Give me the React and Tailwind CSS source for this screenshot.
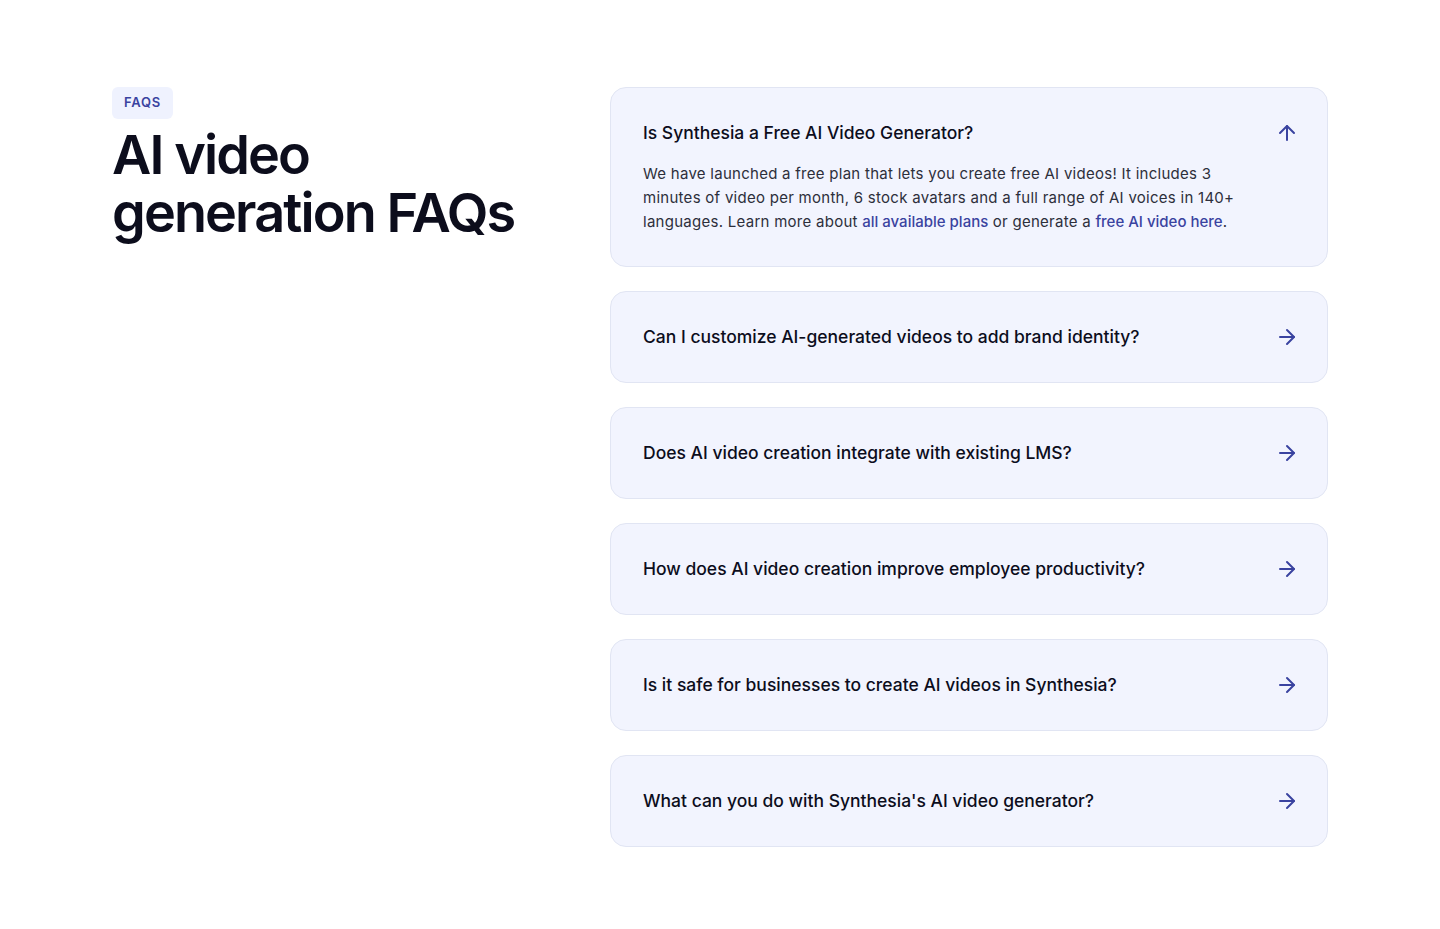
import { ArrowRight, ArrowUp } from "lucide-react";

const faqs = [
  "Can I customize AI-generated videos to add brand identity?",
  "Does AI video creation integrate with existing LMS?",
  "How does AI video creation improve employee productivity?",
  "Is it safe for businesses to create AI videos in Synthesia?",
  "What can you do with Synthesia's AI video generator?",
];

export default function App() {
  return (
    <div className="min-h-screen bg-white font-['Inter',sans-serif] text-[#0c0d1c]">
      <section className="mx-auto flex w-[1216px] gap-6 pt-[87px] pb-20">
        {/* Left heading */}
        <div className="flex-1">
          <span className="inline-flex h-8 items-center rounded-md bg-[#eff2fe] px-3 text-[13px] font-semibold tracking-[0.06em] text-[#3a43a0]">
            FAQS
          </span>
          <h2 className="mt-[7px] text-[54px] font-semibold leading-[58px] tracking-[-0.035em] text-[#0c0d1c]">
            AI video
            <br />
            generation FAQs
          </h2>
        </div>

        {/* Right accordion */}
        <div className="flex w-[718px] flex-col gap-6">
          <div className="rounded-2xl border border-[#e1e5f3] bg-[#f2f4fe] px-8 pt-8 pb-8">
            <div className="flex h-[26px] items-center justify-between">
              <h3 className="text-[17.5px] font-medium leading-[26px] text-[#0c0d1c]">
                Is Synthesia a Free AI Video Generator?
              </h3>
              <ArrowUp className="-mr-1 h-6 w-6 text-[#3a43a0]" strokeWidth={2} />
            </div>
            <p className="mt-4 pr-12 text-[15px] leading-6 tracking-[0.018em] text-[#2d2f3b]">
              We have launched a free plan that lets you create free AI videos! It includes 3 minutes of video per month, 6 stock avatars and a full range of AI voices in 140+ languages. Learn more about{" "}
              <a className="font-medium tracking-normal text-[#3a43a0]">all available plans</a> or generate a{" "}
              <a className="font-medium tracking-normal text-[#3a43a0]">free AI video here</a>.
            </p>
          </div>

          {faqs.map((q) => (
            <div
              key={q}
              className="flex h-[92px] items-center justify-between rounded-2xl border border-[#e1e5f3] bg-[#f2f4fe] px-8"
            >
              <h3 className="text-[17.5px] font-medium leading-[26px] text-[#0c0d1c]">{q}</h3>
              <ArrowRight className="-mr-1 h-6 w-6 text-[#3a43a0]" strokeWidth={2} />
            </div>
          ))}
        </div>
      </section>
    </div>
  );
}
